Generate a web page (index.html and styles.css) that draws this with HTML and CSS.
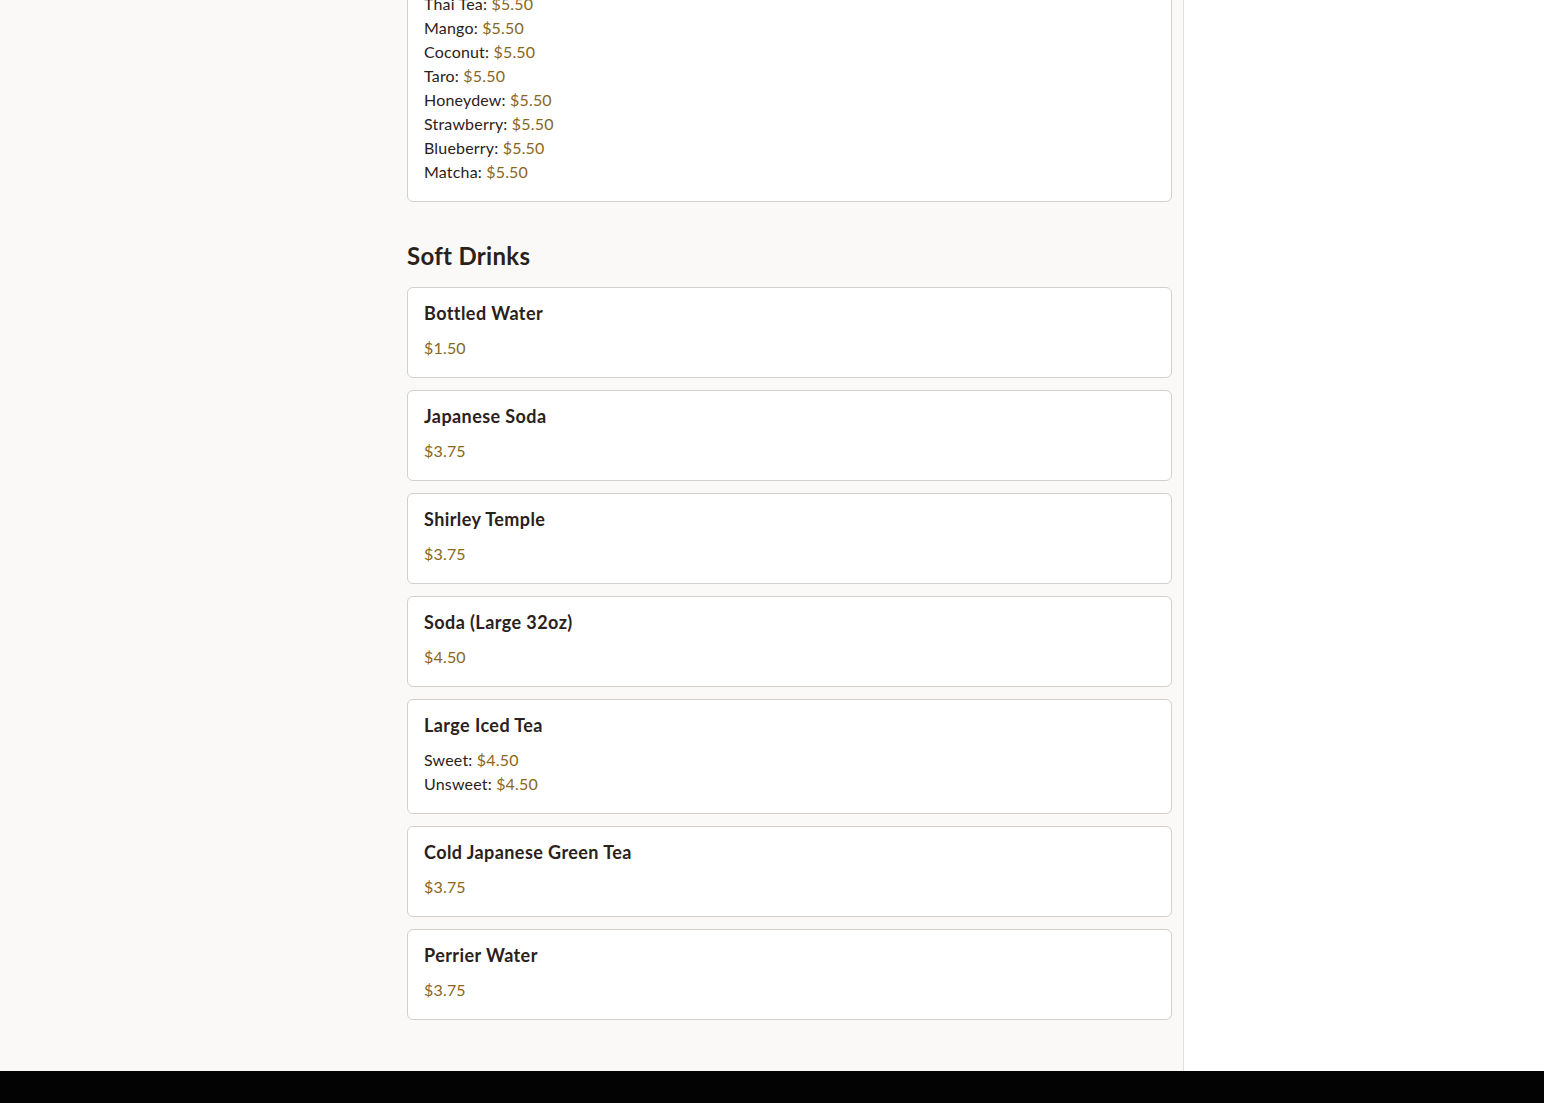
FILE: index.html
```html
<!DOCTYPE html>
<html lang="en">
<head>
<meta charset="utf-8">
<title>Menu</title>
<link rel="stylesheet" href="styles.css">
</head>
<body>
<div class="page">
  <main class="main">
    <div class="content">
      <div class="card card-first">
        <ul class="options">
          <li>Thai Tea: <span class="price">$5.50</span></li>
          <li>Mango: <span class="price">$5.50</span></li>
          <li>Coconut: <span class="price">$5.50</span></li>
          <li>Taro: <span class="price">$5.50</span></li>
          <li>Honeydew: <span class="price">$5.50</span></li>
          <li>Strawberry: <span class="price">$5.50</span></li>
          <li>Blueberry: <span class="price">$5.50</span></li>
          <li>Matcha: <span class="price">$5.50</span></li>
        </ul>
      </div>

      <h2 class="section-title">Soft Drinks</h2>

      <div class="card">
        <h3 class="item-name">Bottled Water</h3>
        <div class="price line">$1.50</div>
      </div>
      <div class="card">
        <h3 class="item-name">Japanese Soda</h3>
        <div class="price line">$3.75</div>
      </div>
      <div class="card">
        <h3 class="item-name">Shirley Temple</h3>
        <div class="price line">$3.75</div>
      </div>
      <div class="card">
        <h3 class="item-name">Soda (Large 32oz)</h3>
        <div class="price line">$4.50</div>
      </div>
      <div class="card">
        <h3 class="item-name">Large Iced Tea</h3>
        <ul class="options">
          <li>Sweet: <span class="price">$4.50</span></li>
          <li>Unsweet: <span class="price">$4.50</span></li>
        </ul>
      </div>
      <div class="card">
        <h3 class="item-name">Cold Japanese Green Tea</h3>
        <div class="price line">$3.75</div>
      </div>
      <div class="card card-last">
        <h3 class="item-name">Perrier Water</h3>
        <div class="price line">$3.75</div>
      </div>
    </div>
  </main>
  <aside class="side"></aside>
</div>
<footer class="footer"></footer>
</body>
</html>
```

FILE: styles.css
```css
* { box-sizing: border-box; }

html, body {
  margin: 0;
  padding: 0;
  background: #ffffff;
  font-family: "Lato", "Noto Sans", sans-serif;
  color: #2b211b;
}

.page {
  display: flex;
  align-items: stretch;
}

.main {
  width: 1184px;
  background: #faf9f7;
  border-right: 1px solid #e2dfda;
  padding: 0 12px 51px 407px;
}

.side {
  flex: 1;
  background: #ffffff;
}

.content {
  width: 765px;
  margin-top: -25px;
}

.card {
  background: #ffffff;
  border: 1px solid #d3d0cb;
  border-radius: 6px;
  padding: 15px 16px 17px;
  margin-bottom: 12px;
}

.card-first {
  padding: 16px 16px 17px;
  margin-bottom: 0;
}

.card-last {
  margin-bottom: 0;
}

.options {
  list-style: none;
  margin: 0;
  padding: 0;
}

.options li,
.line {
  font-size: 16px;
  line-height: 24px;
  letter-spacing: 0.18px;
  color: #2b211b;
}

.price {
  color: #8a661c;
}

.section-title {
  margin: 39px 0 16px;
  font-size: 24px;
  line-height: 30px;
  font-weight: 700;
  letter-spacing: 0.3px;
  color: #2b211b;
}

.item-name {
  margin: 0 0 13px;
  font-size: 18px;
  line-height: 20px;
  font-weight: 700;
  letter-spacing: 0.42px;
  color: #2b211b;
}

.footer {
  height: 40px;
  background: #030303;
}
```
